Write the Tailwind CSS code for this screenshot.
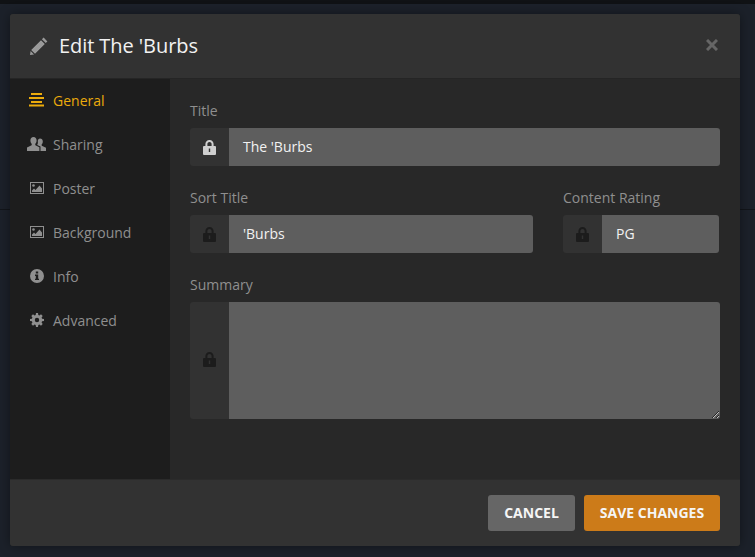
<!DOCTYPE html>
<html lang="en">
<head>
<meta charset="UTF-8">
<script src="https://cdn.jsdelivr.net/npm/@tailwindcss/browser@4"></script>
<title>Edit The 'Burbs</title>
</head>
<body class="relative w-[755px] h-[557px] overflow-hidden bg-[#1c212a] font-['Open_Sans',sans-serif]">
  <!-- backdrop -->
  <div class="absolute top-0 left-0 w-full h-[4px] bg-[#101215]"></div>
  <div class="absolute top-[209px] left-0 w-full h-px bg-[#12151a]"></div>

  <div class="absolute top-[14px] left-[10px] w-[730px] h-[532px] flex flex-col rounded-[3px] overflow-hidden bg-[#282828] shadow-[0_0_12px_rgba(0,0,0,0.4)]">
    <!-- header -->
    <header class="h-[65px] shrink-0 flex items-center justify-between pl-[20px] pr-[22px] bg-[#323232] border-b border-[#252525]">
      <div class="flex items-center gap-[11px]">
        <svg class="w-[18px] h-[18px] text-[#9a9a9a]" viewBox="0 0 18 18" fill="currentColor"><path d="M13.6 0.6 17.4 4.4 15.7 6.1 11.9 2.3ZM11 3.2 14.8 7 5 16.8 1.2 13ZM0.6 14 4 17.4 0 18Z"/></svg>
        <h1 class="text-[20px] leading-[28px] tracking-[-0.07px] text-[#f2f2f2]">Edit The 'Burbs</h1>
      </div>
      <svg class="w-[12px] h-[12px] mb-[3px] text-[#666666]" viewBox="0 0 12 12" fill="none" stroke="currentColor" stroke-width="3"><path d="M1 1 11 11M11 1 1 11"/></svg>
    </header>

    <div class="flex flex-1 min-h-0">
      <!-- sidebar -->
      <nav class="w-[160px] shrink-0 bg-[#1d1d1d] text-[14px] text-[#8f8f8f]">
        <a class="h-[44px] pb-[2px] flex items-center text-[#ebab0c]">
          <span class="w-[43px] flex justify-end pr-[9px]"><svg class="w-[15px] h-[14px]" viewBox="0 0 15 14" fill="currentColor"><rect x="2" y="0" width="11" height="2"/><rect x="0" y="4" width="15" height="2"/><rect x="2" y="8" width="11" height="2"/><rect x="0" y="11.5" width="15" height="2"/></svg></span>
          General
        </a>
        <a class="h-[44px] pb-[2px] flex items-center">
          <span class="w-[43px] flex justify-end pr-[7px]"><svg class="w-[19px] h-[14px]" viewBox="0 0 19 14" fill="currentColor"><path d="M6.5 0C8.4 0 9.6 1.5 9.6 3.5 9.6 5 9 6.2 8.2 7L8.4 8.3 12.4 10.2V14H0V10.6L4.6 8.3 4.8 7C4 6.2 3.4 5 3.4 3.5 3.4 1.5 4.6 0 6.5 0Z"/><path d="M13 1.5C14.7 1.5 15.8 2.8 15.8 4.6 15.8 5.9 15.3 7 14.6 7.6L14.8 8.7 19 10.8V14H13.5V9.6L10.2 8 10.4 7.4C10.9 6.6 11 5.2 10.8 3.9 10.9 2.4 11.8 1.5 13 1.5Z"/></svg></span>
          Sharing
        </a>
        <a class="h-[44px] pb-[2px] flex items-center">
          <span class="w-[43px] flex justify-end pr-[9px]"><svg class="w-[14px] h-[12px]" viewBox="0 0 14 12" fill="currentColor"><path fill-rule="evenodd" d="M0 0H14V12H0ZM1 1V11H13V1Z"/><circle cx="3.5" cy="3.5" r="1.3"/><path d="M2 10V8.5L4 6.5 5.5 8 9.5 3.5 12 6.5V10Z"/></svg></span>
          Poster
        </a>
        <a class="h-[44px] pb-[2px] flex items-center">
          <span class="w-[43px] flex justify-end pr-[9px]"><svg class="w-[14px] h-[12px]" viewBox="0 0 14 12" fill="currentColor"><path fill-rule="evenodd" d="M0 0H14V12H0ZM1 1V11H13V1Z"/><circle cx="3.5" cy="3.5" r="1.3"/><path d="M2 10V8.5L4 6.5 5.5 8 9.5 3.5 12 6.5V10Z"/></svg></span>
          Background
        </a>
        <a class="h-[44px] pb-[2px] flex items-center">
          <span class="w-[43px] flex justify-end pr-[9px]"><svg class="w-[14px] h-[14px]" viewBox="0 0 14 14" fill="currentColor"><path fill-rule="evenodd" d="M7 0A7 7 0 1 1 7 14 7 7 0 1 1 7 0ZM5.8 2.4V4.4H8.2V2.4ZM5 5.6V6.9H5.8V9.8H5V11.1H9V9.8H8.2V5.6Z"/></svg></span>
          Info
        </a>
        <a class="h-[44px] pb-[2px] flex items-center">
          <span class="w-[43px] flex justify-end pr-[9px]"><svg class="w-[14px] h-[14px]" viewBox="0 0 14 14" fill="currentColor"><path fill-rule="evenodd" d="M6 0H8L8.3 1.9 9.5 2.4 11 1.3 12.7 3 11.6 4.5 12.1 5.7 14 6V8L12.1 8.3 11.6 9.5 12.7 11 11 12.7 9.5 11.6 8.3 12.1 8 14H6L5.7 12.1 4.5 11.6 3 12.7 1.3 11 2.4 9.5 1.9 8.3 0 8V6L1.9 5.7 2.4 4.5 1.3 3 3 1.3 4.5 2.4 5.7 1.9ZM7 4.8A2.2 2.2 0 1 0 7 9.2 2.2 2.2 0 1 0 7 4.8Z"/></svg></span>
          Advanced
        </a>
      </nav>

      <!-- form -->
      <main class="flex-1 pl-[20px] pr-[20px] pt-[21px] text-[14px]">
        <label class="block leading-[22px] text-[#8f8f8f]">Title</label>
        <div class="mt-[6px] h-[38px] flex rounded-[3px] overflow-hidden">
          <span class="w-[39px] shrink-0 flex items-center justify-center bg-[#323232] text-[#cfcfcf]"><svg class="w-[13px] h-[15px]" viewBox="0 0 13 15" fill="currentColor"><path fill-rule="evenodd" d="M6.5 0C9 0 10.6 1.7 10.6 4V6H12A1 1 0 0 1 13 7V14A1 1 0 0 1 12 15H1A1 1 0 0 1 0 14V7A1 1 0 0 1 1 6H2.4V4C2.4 1.7 4 0 6.5 0ZM6.5 2C5 2 4.4 3 4.4 4.2V6H8.6V4.2C8.6 3 8 2 6.5 2ZM5.8 8.5V12H7.2V8.5Z"/></svg></span>
          <div class="flex-1 flex items-center pl-[14px] pb-[2px] bg-[#5e5e5e] text-[#f2f2f2]">The 'Burbs</div>
        </div>

        <div class="mt-[21px] flex justify-between">
          <div class="w-[343px]">
            <label class="block leading-[22px] text-[#8f8f8f]">Sort Title</label>
            <div class="mt-[6px] h-[38px] flex rounded-[3px] overflow-hidden">
              <span class="w-[39px] shrink-0 flex items-center justify-center bg-[#323232] text-[#1c1c1c]"><svg class="w-[13px] h-[15px]" viewBox="0 0 13 15" fill="currentColor"><path fill-rule="evenodd" d="M6.5 0C9 0 10.6 1.7 10.6 4V6H12A1 1 0 0 1 13 7V14A1 1 0 0 1 12 15H1A1 1 0 0 1 0 14V7A1 1 0 0 1 1 6H2.4V4C2.4 1.7 4 0 6.5 0ZM6.5 2C5 2 4.4 3 4.4 4.2V6H8.6V4.2C8.6 3 8 2 6.5 2ZM5.8 8.5V12H7.2V8.5Z"/></svg></span>
              <div class="flex-1 flex items-center pl-[14px] pb-[2px] bg-[#5e5e5e] text-[#f2f2f2]">'Burbs</div>
            </div>
          </div>
          <div class="w-[156px] mr-[1px]">
            <label class="block leading-[22px] text-[#8f8f8f]">Content Rating</label>
            <div class="mt-[6px] h-[38px] flex rounded-[3px] overflow-hidden">
              <span class="w-[39px] shrink-0 flex items-center justify-center bg-[#323232] text-[#1c1c1c]"><svg class="w-[13px] h-[15px]" viewBox="0 0 13 15" fill="currentColor"><path fill-rule="evenodd" d="M6.5 0C9 0 10.6 1.7 10.6 4V6H12A1 1 0 0 1 13 7V14A1 1 0 0 1 12 15H1A1 1 0 0 1 0 14V7A1 1 0 0 1 1 6H2.4V4C2.4 1.7 4 0 6.5 0ZM6.5 2C5 2 4.4 3 4.4 4.2V6H8.6V4.2C8.6 3 8 2 6.5 2ZM5.8 8.5V12H7.2V8.5Z"/></svg></span>
              <div class="flex-1 flex items-center pl-[14px] pb-[2px] bg-[#5e5e5e] text-[#f2f2f2]">PG</div>
            </div>
          </div>
        </div>

        <div class="mt-[21px]">
          <label class="block leading-[22px] text-[#8f8f8f]">Summary</label>
          <div class="mt-[6px] h-[117px] flex rounded-[3px] overflow-hidden">
            <span class="w-[39px] pb-[2px] shrink-0 flex items-center justify-center bg-[#323232] text-[#1c1c1c]"><svg class="w-[13px] h-[15px]" viewBox="0 0 13 15" fill="currentColor"><path fill-rule="evenodd" d="M6.5 0C9 0 10.6 1.7 10.6 4V6H12A1 1 0 0 1 13 7V14A1 1 0 0 1 12 15H1A1 1 0 0 1 0 14V7A1 1 0 0 1 1 6H2.4V4C2.4 1.7 4 0 6.5 0ZM6.5 2C5 2 4.4 3 4.4 4.2V6H8.6V4.2C8.6 3 8 2 6.5 2ZM5.8 8.5V12H7.2V8.5Z"/></svg></span>
            <textarea class="flex-1 bg-[#5e5e5e] outline-none"></textarea>
          </div>
        </div>
      </main>
    </div>

    <!-- footer -->
    <footer class="h-[67px] shrink-0 flex items-center justify-end gap-[9px] pr-[20px] bg-[#323232] border-t border-[#2b2b2b]">
      <button class="w-[87px] h-[36px] pb-[2px] rounded-[3px] bg-[#666666] text-[14px] font-bold text-[#f5f5f5]">CANCEL</button>
      <button class="w-[136px] h-[36px] pb-[2px] rounded-[3px] bg-[#cc7b19] text-[14px] font-bold text-[#f5f5f5]">SAVE CHANGES</button>
    </footer>
  </div>
</body>
</html>
